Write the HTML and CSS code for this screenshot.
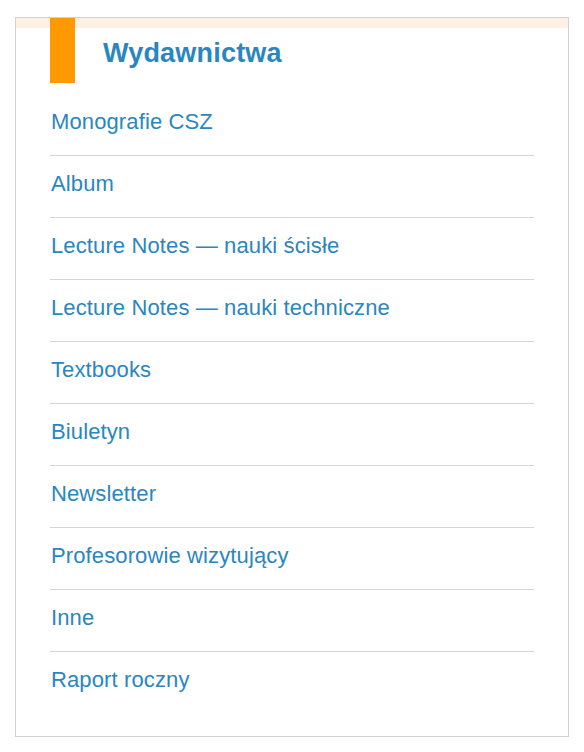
FILE: index.html
```html
<!DOCTYPE html>
<html lang="pl">
<head>
<meta charset="utf-8">
<title>Wydawnictwa</title>
<link rel="stylesheet" href="styles.css">
</head>
<body>
<div class="box">
  <div class="box-header">
    <span class="marker"></span>
    <h2 class="title">Wydawnictwa</h2>
  </div>
  <ul class="menu">
    <li><a href="#">Monografie CSZ</a></li>
    <li><a href="#">Album</a></li>
    <li><a href="#">Lecture Notes — nauki ścisłe</a></li>
    <li><a href="#">Lecture Notes — nauki techniczne</a></li>
    <li><a href="#">Textbooks</a></li>
    <li><a href="#">Biuletyn</a></li>
    <li><a href="#">Newsletter</a></li>
    <li><a href="#">Profesorowie wizytujący</a></li>
    <li><a href="#">Inne</a></li>
    <li><a href="#">Raport roczny</a></li>
  </ul>
</div>
</body>
</html>
```

FILE: styles.css
```css
html, body {
  margin: 0;
  padding: 0;
  background: #ffffff;
}

body {
  font-family: "Liberation Sans", Arial, sans-serif;
}

.box {
  margin: 17px 0 0 15px;
  width: 552px;
  border: 1px solid #d2d2d2;
  padding-bottom: 23px;
}

.box-header {
  display: flex;
  align-items: flex-start;
  background: linear-gradient(#fdf1e4 0, #fdf1e4 10px, transparent 10px);
}

.marker {
  display: block;
  width: 25px;
  height: 65px;
  margin-left: 34px;
  background: #ff9900;
  flex: none;
}

.title {
  margin: 20px 0 0 28px;
  font-size: 27px;
  line-height: 31px;
  font-weight: bold;
  letter-spacing: 0.2px;
  color: #2a86c0;
}

.menu {
  list-style: none;
  margin: 0 34px 0 34px;
  padding: 11px 0 0 0;
}

.menu li {
  height: 61px;
  border-bottom: 1px solid #d4d4d4;
}

.menu li:last-child {
  border-bottom: none;
}

.menu a {
  display: block;
  padding-top: 15px;
  padding-left: 1px;
  font-size: 22px;
  line-height: 25px;
  letter-spacing: 0.12px;
  color: #2a86c0;
  text-decoration: none;
}
```
